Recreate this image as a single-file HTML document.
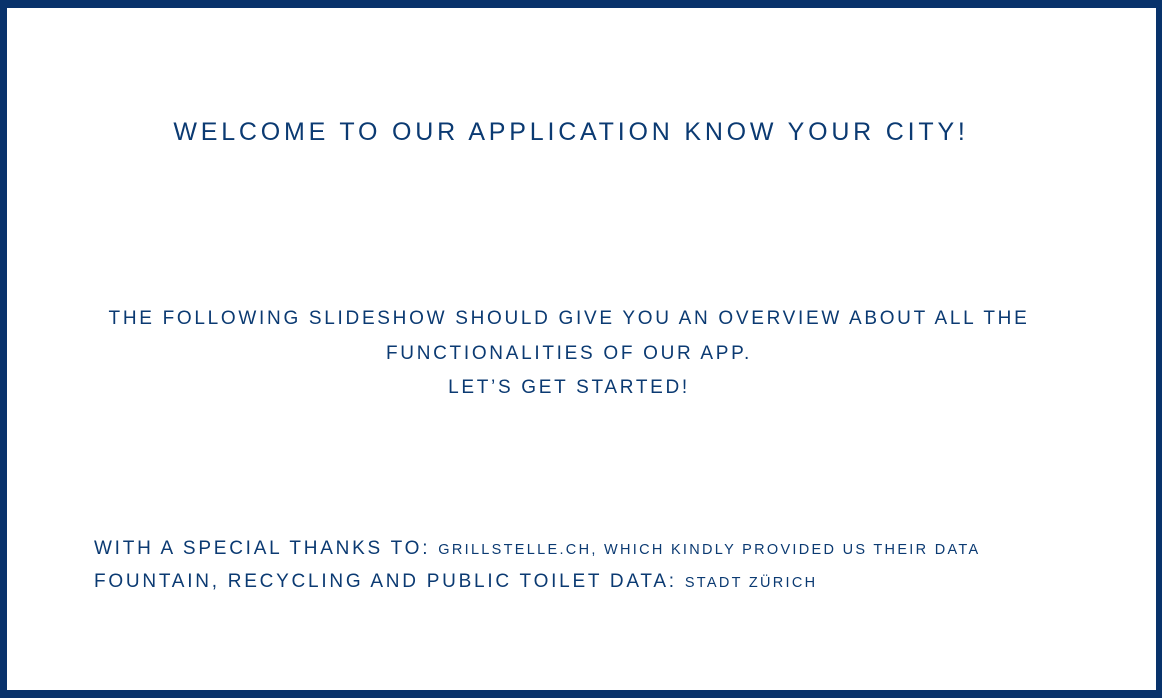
<!DOCTYPE html>
<html><head><meta charset="utf-8"><style>
html,body{margin:0;padding:0;background:#fff}
body{width:1162px;height:698px;position:relative;overflow:hidden;font-family:"Liberation Sans",sans-serif;color:#0b3a72}
.frame{position:absolute;left:0;top:0;width:1162px;height:698px;box-sizing:border-box;border:7px solid #08326b;border-top-width:8px;border-bottom-width:8px;border-right-width:6px}
.t{position:absolute;left:0;width:1162px;text-align:center;white-space:nowrap}
.title{top:118px;font-size:25px;letter-spacing:3.8px;left:-10px}
.mid{top:302px;font-size:19px;letter-spacing:2.7px;line-height:34.5px;left:-12px}
.b{position:absolute;left:94px;white-space:nowrap;font-size:19px;letter-spacing:2.75px}
.b small{font-size:14.5px;letter-spacing:2.3px}
</style></head><body>
<div class="frame"></div>
<div class="t title">WELCOME TO OUR APPLICATION KNOW YOUR CITY!</div>
<div class="t mid">THE FOLLOWING SLIDESHOW SHOULD GIVE YOU AN OVERVIEW ABOUT ALL THE<br>FUNCTIONALITIES OF OUR APP.<br>LET’S GET STARTED!</div>
<div class="b" style="top:538px">WITH A SPECIAL THANKS TO: <small>GRILLSTELLE.CH, WHICH KINDLY PROVIDED US THEIR DATA</small></div>
<div class="b" style="top:571px">FOUNTAIN, RECYCLING AND PUBLIC TOILET DATA: <small>STADT ZÜRICH</small></div>
</body></html>
